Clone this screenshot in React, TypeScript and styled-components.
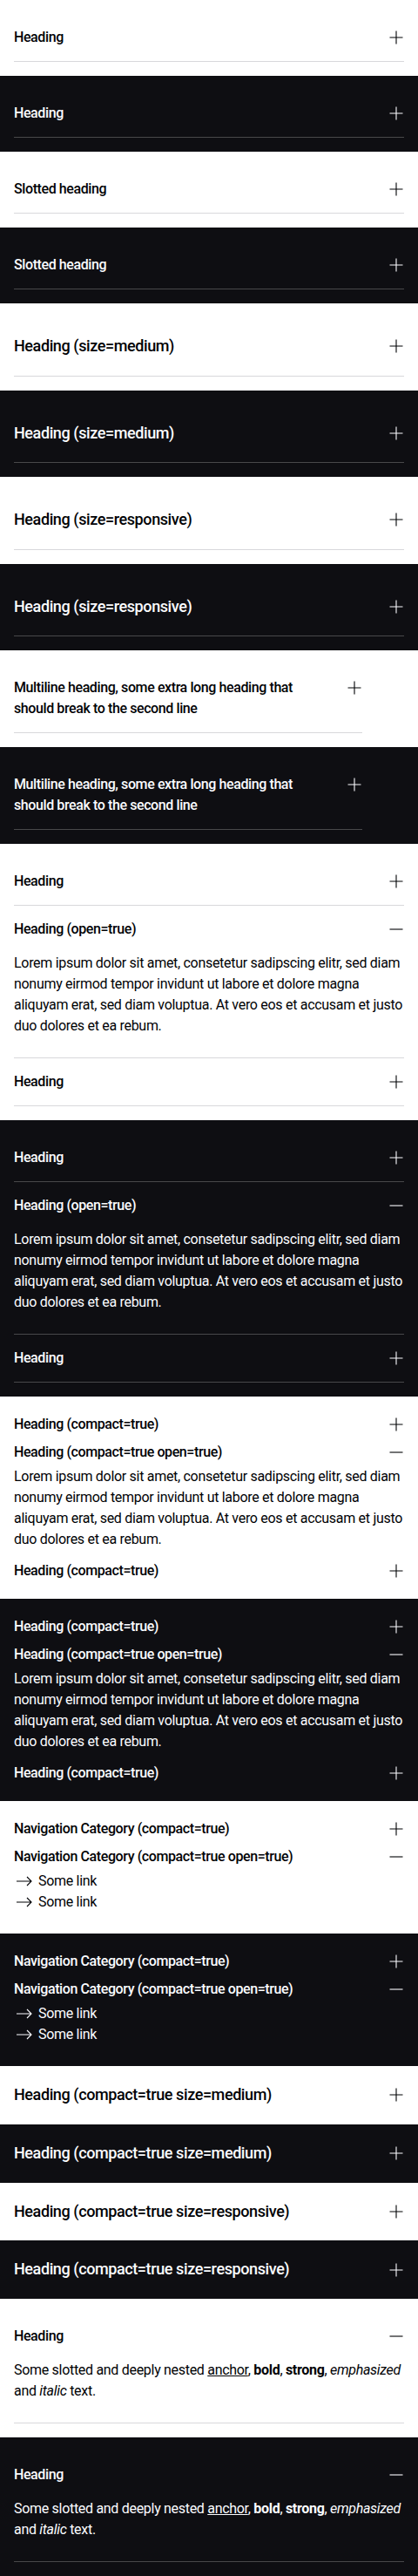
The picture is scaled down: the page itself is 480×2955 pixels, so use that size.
import React from 'react';
import styled, { createGlobalStyle } from 'styled-components';

type Theme = 'light' | 'dark';
type Size = 'small' | 'medium';

const palette = {
  light: { bg: '#ffffff', text: '#010205', border: '#d8d8db' },
  dark: { bg: '#0e0e12', text: '#fbfcff', border: '#48484a' },
};

const GlobalStyle = createGlobalStyle`
  html, body {
    margin: 0;
    padding: 0;
    background: #ffffff;
    overflow: hidden;
  }
  body {
    font-family: Roboto, 'Liberation Sans', sans-serif;
    -webkit-font-smoothing: antialiased;
  }
  * {
    box-sizing: border-box;
  }
`;

const Surface = styled.section<{ $theme: Theme }>`
  padding: 16px;
  background: ${(p) => palette[p.$theme].bg};
  color: ${(p) => palette[p.$theme].text};
`;

const Item = styled.div<{ $theme: Theme; $compact?: boolean; $maxWidth?: number }>`
  max-width: ${(p) => (p.$maxWidth ? `${p.$maxWidth}px` : 'none')};
  border-bottom: ${(p) => (p.$compact ? 'none' : `1px solid ${palette[p.$theme].border}`)};
`;

const headingPadding = (size: Size, compact?: boolean) => {
  if (size === 'medium') return compact ? '3.125px 0' : '19px 0';
  return compact ? '4px 0' : '15px 0';
};

const HeadingRow = styled.div<{ $size: Size; $compact?: boolean }>`
  display: flex;
  align-items: flex-start;
  justify-content: space-between;
  gap: 24px;
  padding: ${(p) => headingPadding(p.$size, p.$compact)};
  cursor: pointer;
`;

const HeadingText = styled.h2<{ $size: Size }>`
  margin: 0;
  flex: 1;
  font-size: ${(p) => (p.$size === 'medium' ? '18px' : '16px')};
  line-height: ${(p) => (p.$size === 'medium' ? '28.5px' : '24px')};
  font-weight: 500;
  letter-spacing: -0.4px;
`;

const IconSlot = styled.span<{ $size: Size }>`
  flex: none;
  width: 24px;
  height: ${(p) => (p.$size === 'medium' ? '28.5px' : '24px')};
  display: flex;
  align-items: center;
  justify-content: center;
`;

const Content = styled.div<{ $compact?: boolean }>`
  padding-bottom: ${(p) => (p.$compact ? '8px' : '24px')};
  font-size: 16px;
  line-height: 24px;
  letter-spacing: -0.3px;
`;

const Paragraph = styled.p`
  margin: 0;

  a {
    color: inherit;
    text-decoration: underline;
  }
  b,
  strong {
    font-weight: 700;
  }
`;

const LinkList = styled.div`
  display: flex;
  flex-direction: column;
`;

const LinkRow = styled.a`
  display: flex;
  align-items: center;
  gap: 4px;
  color: inherit;
  text-decoration: none;
  font-size: 16px;
  line-height: 24px;
`;

const ToggleIcon = ({ open }: { open?: boolean }) => (
  <svg width="24" height="24" viewBox="0 0 24 24" fill="none" stroke="currentColor" strokeWidth="1.1">
    {open ? <path d="M7.5 12h15" /> : <path d="M15 4.5v15M7.5 12h15" />}
  </svg>
);

const ArrowIcon = () => (
  <svg width="24" height="24" viewBox="0 0 24 24" fill="none" stroke="currentColor" strokeWidth="1.1">
    <path d="M3 12h17M15 7l5 5-5 5" />
  </svg>
);

type AccordionProps = {
  theme: Theme;
  heading: React.ReactNode;
  open?: boolean;
  compact?: boolean;
  size?: Size;
  maxWidth?: number;
  children?: React.ReactNode;
};

const Accordion = ({ theme, heading, open, compact, size = 'small', maxWidth, children }: AccordionProps) => (
  <Item $theme={theme} $compact={compact} $maxWidth={maxWidth}>
    <HeadingRow $size={size} $compact={compact}>
      <HeadingText $size={size}>{heading}</HeadingText>
      <IconSlot $size={size}>
        <ToggleIcon open={open} />
      </IconSlot>
    </HeadingRow>
    {open && <Content $compact={compact}>{children}</Content>}
  </Item>
);

const LOREM =
  'Lorem ipsum dolor sit amet, consetetur sadipscing elitr, sed diam nonumy eirmod tempor invidunt ut labore et dolore magna aliquyam erat, sed diam voluptua. At vero eos et accusam et justo duo dolores et ea rebum.';

const themes: Theme[] = ['light', 'dark'];

export default function App() {
  return (
    <>
      <GlobalStyle />
      {themes.map((t) => (
        <Surface key={`h-${t}`} $theme={t}>
          <Accordion theme={t} heading="Heading" />
        </Surface>
      ))}
      {themes.map((t) => (
        <Surface key={`s-${t}`} $theme={t}>
          <Accordion theme={t} heading={<span>Slotted heading</span>} />
        </Surface>
      ))}
      {themes.map((t) => (
        <Surface key={`m-${t}`} $theme={t}>
          <Accordion theme={t} size="medium" heading="Heading (size=medium)" />
        </Surface>
      ))}
      {themes.map((t) => (
        <Surface key={`r-${t}`} $theme={t}>
          <Accordion theme={t} size="medium" heading="Heading (size=responsive)" />
        </Surface>
      ))}
      {themes.map((t) => (
        <Surface key={`ml-${t}`} $theme={t}>
          <Accordion
            theme={t}
            maxWidth={400}
            heading="Multiline heading, some extra long heading that should break to the second line"
          />
        </Surface>
      ))}
      {themes.map((t) => (
        <Surface key={`o-${t}`} $theme={t}>
          <Accordion theme={t} heading="Heading" />
          <Accordion theme={t} heading="Heading (open=true)" open>
            <Paragraph>{LOREM}</Paragraph>
          </Accordion>
          <Accordion theme={t} heading="Heading" />
        </Surface>
      ))}
      {themes.map((t) => (
        <Surface key={`c-${t}`} $theme={t}>
          <Accordion theme={t} compact heading="Heading (compact=true)" />
          <Accordion theme={t} compact open heading="Heading (compact=true open=true)">
            <Paragraph>{LOREM}</Paragraph>
          </Accordion>
          <Accordion theme={t} compact heading="Heading (compact=true)" />
        </Surface>
      ))}
      {themes.map((t) => (
        <Surface key={`n-${t}`} $theme={t}>
          <Accordion theme={t} compact heading="Navigation Category (compact=true)" />
          <Accordion theme={t} compact open heading="Navigation Category (compact=true open=true)">
            <LinkList>
              <LinkRow href="#">
                <ArrowIcon />
                Some link
              </LinkRow>
              <LinkRow href="#">
                <ArrowIcon />
                Some link
              </LinkRow>
            </LinkList>
          </Accordion>
        </Surface>
      ))}
      {themes.map((t) => (
        <Surface key={`cm-${t}`} $theme={t}>
          <Accordion theme={t} compact size="medium" heading="Heading (compact=true size=medium)" />
        </Surface>
      ))}
      {themes.map((t) => (
        <Surface key={`cr-${t}`} $theme={t}>
          <Accordion theme={t} compact size="medium" heading="Heading (compact=true size=responsive)" />
        </Surface>
      ))}
      {themes.map((t) => (
        <Surface key={`sl-${t}`} $theme={t}>
          <Accordion theme={t} open heading="Heading">
            <Paragraph>
              Some slotted and deeply nested <a href="#">anchor</a>, <b>bold</b>, <strong>strong</strong>,{' '}
              <em>emphasized</em> and <i>italic</i> text.
            </Paragraph>
          </Accordion>
        </Surface>
      ))}
    </>
  );
}
